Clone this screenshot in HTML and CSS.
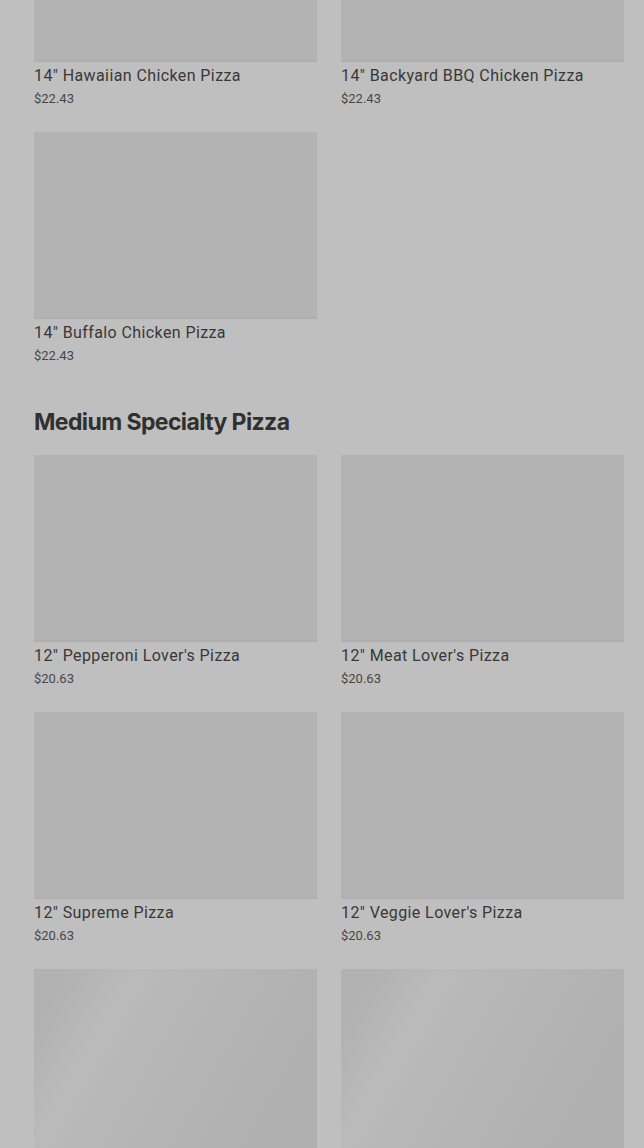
FILE: index.html
```html
<!DOCTYPE html>
<html lang="en">
  <head>
    <meta charset="UTF-8" />
    <title>Menu</title>
    <link rel="stylesheet" href="styles.css">
  </head>
  <body>
    <div class="menu">
      <section class="category">
        <div class="grid">
          <div class="item">
            <div class="thumb"></div>
            <div class="name">14" Hawaiian Chicken Pizza</div>
            <div class="price">$22.43</div>
          </div>
          <div class="item">
            <div class="thumb"></div>
            <div class="name">14" Backyard BBQ Chicken Pizza</div>
            <div class="price">$22.43</div>
          </div>
          <div class="item">
            <div class="thumb"></div>
            <div class="name">14" Buffalo Chicken Pizza</div>
            <div class="price">$22.43</div>
          </div>
        </div>
      </section>

      <section class="category">
        <h2>Medium Specialty Pizza</h2>
        <div class="grid">
          <div class="item">
            <div class="thumb"></div>
            <div class="name">12" Pepperoni Lover's Pizza</div>
            <div class="price">$20.63</div>
          </div>
          <div class="item">
            <div class="thumb"></div>
            <div class="name">12" Meat Lover's Pizza</div>
            <div class="price">$20.63</div>
          </div>
          <div class="item">
            <div class="thumb"></div>
            <div class="name">12" Supreme Pizza</div>
            <div class="price">$20.63</div>
          </div>
          <div class="item">
            <div class="thumb"></div>
            <div class="name">12" Veggie Lover's Pizza</div>
            <div class="price">$20.63</div>
          </div>
          <div class="item">
            <div class="thumb loading"></div>
          </div>
          <div class="item">
            <div class="thumb loading"></div>
          </div>
        </div>
      </section>
    </div>
  </body>
</html>
```

FILE: styles.css
```css
body {
  margin: 0;
  background-color: #bfbfbf;
  font-family: Roboto, "Liberation Sans", sans-serif;
  color: #373737;
  overflow: hidden;
}
/* page is scrolled part way down the menu */
.menu {
  margin-top: -125px;
  padding: 0 20px 0 34px;
}
.category h2 {
  font-family: Inter, "Liberation Sans", sans-serif;
  font-size: 23px;
  font-weight: 700;
  letter-spacing: -0.6px;
  line-height: 32px;
  color: #303030;
  margin: 39px 0 17px;
}
.grid {
  display: grid;
  grid-template-columns: 283px 283px;
  column-gap: 24px;
  row-gap: 22px;
}
.item {
  height: 235px;
}
.thumb {
  height: 187px;
  background-color: #b3b3b3;
  box-shadow: inset 0 -3px 3px -2px rgba(0, 0, 0, 0.04);
}
.thumb.loading {
  height: 300px;
  background: linear-gradient(120deg, #b2b2b2 0%, #b2b2b2 8%, #bababa 22%, #b5b5b5 45%, #b0b0b0 70%, #b0b0b0 100%);
}
.name {
  font-size: 16px;
  line-height: 24px;
  letter-spacing: 0.4px;
  margin-top: 2px;
  color: #383838;
}
.price {
  font-size: 13px;
  line-height: 20px;
  margin-top: 1px;
  color: #474747;
}
```
